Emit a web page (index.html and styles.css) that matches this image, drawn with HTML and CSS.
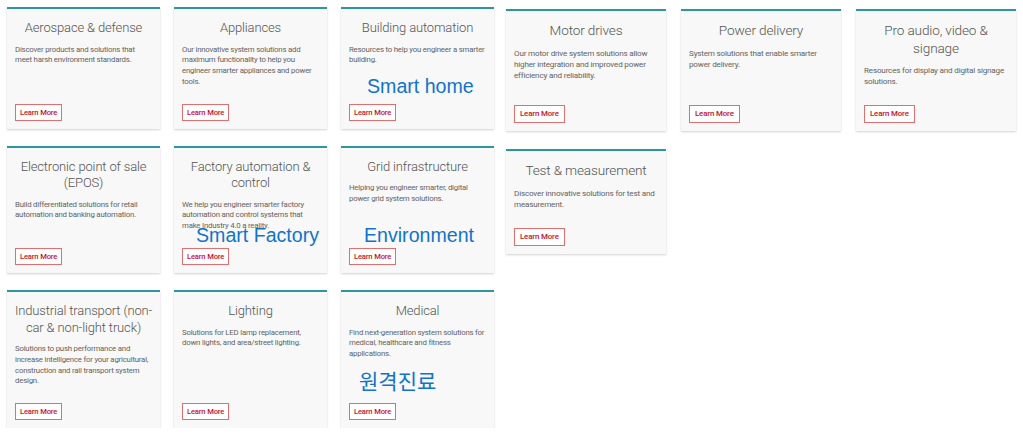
FILE: index.html
```html
<!DOCTYPE html>
<html lang="en">
<head>
<meta charset="utf-8">
<title>Applications</title>
<link rel="stylesheet" href="styles.css">
</head>
<body>
<div class="page">
  <section class="group">
    <article class="card">
      <h3 class="card__title">Aerospace &amp; defense</h3>
      <p class="card__text">Discover products and solutions that meet harsh environment standards.</p>
      <a class="card__btn" href="#">Learn More</a>
    </article>
    <article class="card">
      <h3 class="card__title">Appliances</h3>
      <p class="card__text">Our innovative system solutions add maximum functionality to help you engineer smarter appliances and power tools.</p>
      <a class="card__btn" href="#">Learn More</a>
    </article>
    <article class="card">
      <h3 class="card__title">Building automation</h3>
      <p class="card__text">Resources to help you engineer a smarter building.</p>
      <span class="note note--home">Smart home</span>
      <a class="card__btn" href="#">Learn More</a>
    </article>
    <article class="card">
      <h3 class="card__title">Electronic point of sale (EPOS)</h3>
      <p class="card__text">Build differentiated solutions for retail automation and banking automation.</p>
      <a class="card__btn" href="#">Learn More</a>
    </article>
    <article class="card">
      <h3 class="card__title">Factory automation &amp; control</h3>
      <p class="card__text">We help you engineer smarter factory automation and control systems that make Industry 4.0 a reality.</p>
      <span class="note note--factory">Smart Factory</span>
      <a class="card__btn" href="#">Learn More</a>
    </article>
    <article class="card">
      <h3 class="card__title">Grid infrastructure</h3>
      <p class="card__text">Helping you engineer smarter, digital power grid system solutions.</p>
      <span class="note note--env">Environment</span>
      <a class="card__btn" href="#">Learn More</a>
    </article>
    <article class="card">
      <h3 class="card__title">Industrial transport (non-<wbr>car &amp; non-light truck)</h3>
      <p class="card__text">Solutions to push performance and increase intelligence for your agricultural, construction and rail transport system design.</p>
      <a class="card__btn" href="#">Learn More</a>
    </article>
    <article class="card">
      <h3 class="card__title">Lighting</h3>
      <p class="card__text">Solutions for LED lamp replacement, down lights, and area/street lighting.</p>
      <a class="card__btn" href="#">Learn More</a>
    </article>
    <article class="card">
      <h3 class="card__title">Medical</h3>
      <p class="card__text">Find next-generation system solutions for medical, healthcare and fitness applications.</p>
      <span class="note note--med">원격진료</span>
      <a class="card__btn" href="#">Learn More</a>
    </article>
  </section>

  <section class="group group--wide">
    <article class="card">
      <h3 class="card__title">Motor drives</h3>
      <p class="card__text">Our motor drive system solutions allow higher integration and improved power efficiency and reliability.</p>
      <a class="card__btn" href="#">Learn More</a>
    </article>
    <article class="card">
      <h3 class="card__title">Power delivery</h3>
      <p class="card__text">System solutions that enable smarter power delivery.</p>
      <a class="card__btn" href="#">Learn More</a>
    </article>
    <article class="card">
      <h3 class="card__title">Pro audio, video &amp; signage</h3>
      <p class="card__text">Resources for display and digital signage solutions.</p>
      <a class="card__btn" href="#">Learn More</a>
    </article>
    <article class="card">
      <h3 class="card__title">Test &amp; measurement</h3>
      <p class="card__text">Discover innovative solutions for test and measurement.</p>
      <a class="card__btn" href="#">Learn More</a>
    </article>
  </section>
</div>
</body>
</html>
```

FILE: styles.css
```css
html, body {
  margin: 0;
  padding: 0;
  background: #ffffff;
}

body {
  font-family: Roboto, "Liberation Sans", Arial, sans-serif;
  color: #555;
}

.page {
  display: flex;
  align-items: flex-start;
  padding: 7px 0 0 7px;
  gap: 12px;
}

.group {
  display: grid;
  grid-template-columns: repeat(3, 153px);
  column-gap: 14px;
  row-gap: 17px;
}

.card {
  position: relative;
  display: flex;
  flex-direction: column;
  background: #f8f8f8;
  border-top: 2px solid #2f95a1;
  box-shadow: 0 1px 2px rgba(0, 0, 0, 0.18);
  padding: 11px 8px 8px;
}

.card__title {
  margin: 0 -4px 8px;
  font-size: 13px;
  letter-spacing: -0.15px;
  line-height: 16.5px;
  font-weight: 300;
  color: #555;
  text-align: center;
}

.card__text {
  margin: 0 0 16px;
  font-size: 7.8px;
  letter-spacing: -0.2px;
  line-height: 10.8px;
  color: #636363;
}

.card__btn {
  align-self: flex-start;
  margin-top: auto;
  display: block;
  box-sizing: border-box;
  height: 17px;
  padding: 0 4px;
  border: 1px solid #e07070;
  background: #fff;
  color: #c8102e;
  font-size: 7.6px;
  letter-spacing: -0.15px;
  line-height: 15px;
  font-weight: 500;
  text-decoration: none;
}

/* right-hand group, rendered slightly larger */
.group--wide {
  margin-top: 2px;
  grid-template-columns: repeat(3, 160px);
  column-gap: 15px;
  row-gap: 18px;
}

.group--wide .card__title {
  margin: 0 0 8px;
  font-size: 13.6px;
  line-height: 17.5px;
}

.group--wide .card__text {
  font-size: 8.1px;
  letter-spacing: -0.18px;
  line-height: 11px;
  margin-bottom: 18px;
}

.group--wide .card__btn {
  height: 18px;
  line-height: 16px;
  font-size: 7.9px;
  padding: 0 5px;
}

/* annotations written over the cards */
.note {
  position: absolute;
  font-family: "Liberation Sans", Arial, "Noto Sans CJK KR", sans-serif;
  font-size: 19.6px;
  line-height: 23px;
  color: #1273c9;
  white-space: nowrap;
}

.note--home { left: 26px; top: 66px; }
.note--factory { left: 22px; top: 76px; }
.note--env { left: 23px; top: 76px; }
.note--med {
  left: 18px;
  top: 77px;
  font-size: 21px;
  font-family: "Noto Sans CJK KR", sans-serif;
}
```
